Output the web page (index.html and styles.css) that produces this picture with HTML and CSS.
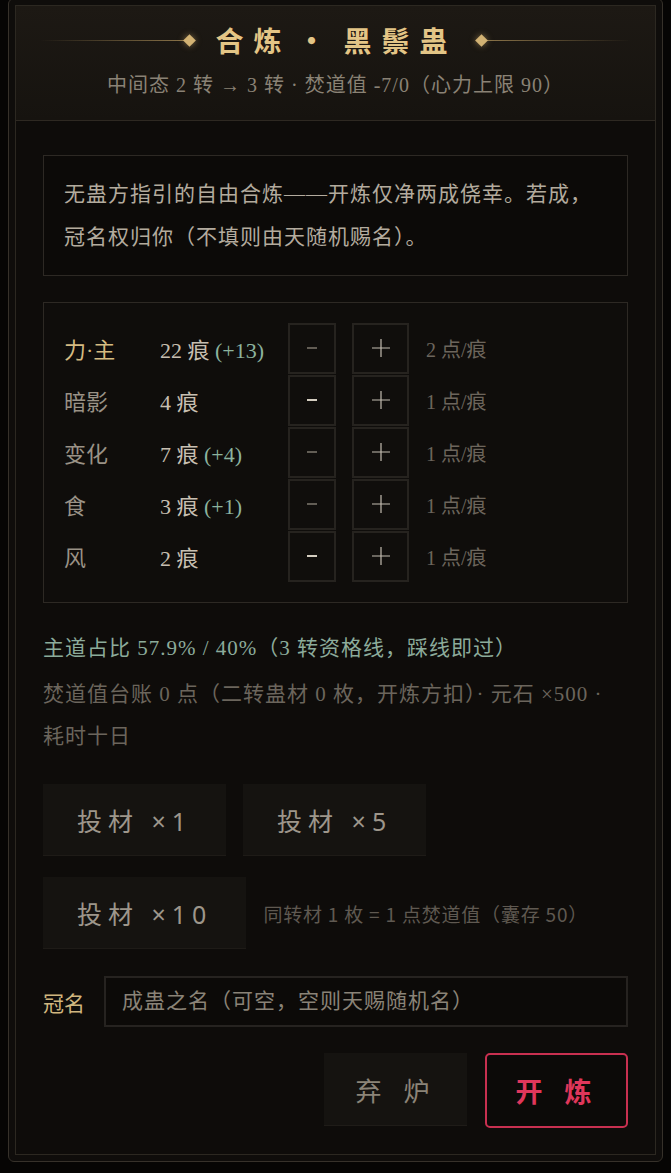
FILE: index.html
```html
<!DOCTYPE html>
<html lang="zh-CN">
<head>
    <meta charset="UTF-8">
    <meta name="viewport" content="width=device-width, initial-scale=1.0">
    <title>合炼 · 黑鬃蛊</title>
    <link rel="stylesheet" href="styles.css">
</head>
<body>
    <div class="frame">
        <div class="inner">
            <div class="head">
                <div class="title-row">
                    <span class="rule left"></span>
                    <span class="gem"></span>
                    <h1>合炼<span class="sep">·</span>黑鬃蛊</h1>
                    <span class="gem"></span>
                    <span class="rule right"></span>
                </div>
                <p class="sub">中间态 2 转 → 3 转 · 焚道值 -7/0（心力上限 90）</p>
            </div>

            <div class="content">
                <div class="note">无蛊方指引的自由合炼——开炼仅净两成侥幸。若成，冠名权归你（不填则由天随机赐名）。</div>

                <div class="paths">
                    <div class="path-row">
                        <span class="name main">力·主</span>
                        <span class="val">22 痕 <em>(+13)</em></span>
                        <button class="step minus"><svg width="10" height="2" viewBox="0 0 10 2"><path d="M0 1h10" stroke="currentColor" stroke-width="1.2"/></svg></button>
                        <button class="step plus"><svg width="18" height="18" viewBox="0 0 18 18"><path d="M9 0v18M0 9h18" stroke="currentColor" stroke-width="1.2"/></svg></button>
                        <span class="cost">2 点/痕</span>
                    </div>
                    <div class="path-row">
                        <span class="name">暗影</span>
                        <span class="val">4 痕</span>
                        <button class="step minus strong"><svg width="10" height="2" viewBox="0 0 10 2"><path d="M0 1h10" stroke="currentColor" stroke-width="2"/></svg></button>
                        <button class="step plus"><svg width="18" height="18" viewBox="0 0 18 18"><path d="M9 0v18M0 9h18" stroke="currentColor" stroke-width="1.2"/></svg></button>
                        <span class="cost">1 点/痕</span>
                    </div>
                    <div class="path-row">
                        <span class="name">变化</span>
                        <span class="val">7 痕 <em>(+4)</em></span>
                        <button class="step minus"><svg width="10" height="2" viewBox="0 0 10 2"><path d="M0 1h10" stroke="currentColor" stroke-width="1.2"/></svg></button>
                        <button class="step plus"><svg width="18" height="18" viewBox="0 0 18 18"><path d="M9 0v18M0 9h18" stroke="currentColor" stroke-width="1.2"/></svg></button>
                        <span class="cost">1 点/痕</span>
                    </div>
                    <div class="path-row">
                        <span class="name">食</span>
                        <span class="val">3 痕 <em>(+1)</em></span>
                        <button class="step minus"><svg width="10" height="2" viewBox="0 0 10 2"><path d="M0 1h10" stroke="currentColor" stroke-width="1.2"/></svg></button>
                        <button class="step plus"><svg width="18" height="18" viewBox="0 0 18 18"><path d="M9 0v18M0 9h18" stroke="currentColor" stroke-width="1.2"/></svg></button>
                        <span class="cost">1 点/痕</span>
                    </div>
                    <div class="path-row">
                        <span class="name">风</span>
                        <span class="val">2 痕</span>
                        <button class="step minus strong"><svg width="10" height="2" viewBox="0 0 10 2"><path d="M0 1h10" stroke="currentColor" stroke-width="2"/></svg></button>
                        <button class="step plus"><svg width="18" height="18" viewBox="0 0 18 18"><path d="M9 0v18M0 9h18" stroke="currentColor" stroke-width="1.2"/></svg></button>
                        <span class="cost">1 点/痕</span>
                    </div>
                </div>

                <p class="ratio">主道占比 57.9% / 40%（3 转资格线，踩线即过）</p>
                <p class="ledger">焚道值台账 0 点（二转蛊材 0 枚，开炼方扣）· 元石 ×500 · 耗时十日</p>

                <div class="feed-row">
                    <button class="feed">投材 ×1</button>
                    <button class="feed">投材 ×5</button>
                </div>
                <div class="feed-row second">
                    <button class="feed">投材 ×10</button>
                    <span class="hint">同转材 1 枚 = 1 点焚道值（囊存 50）</span>
                </div>

                <div class="name-row">
                    <label for="gu-name">冠名</label>
                    <input type="text" id="gu-name" placeholder="成蛊之名（可空，空则天赐随机名）">
                </div>

                <div class="actions">
                    <button class="btn-quit">弃 炉</button>
                    <button class="btn-start">开 炼</button>
                </div>
            </div>
        </div>
    </div>
</body>
</html>
```

FILE: styles.css
```css
body {
    margin: 0;
    padding: 0 8px 12px;
    background-color: #060504;
    font-family: 'Liberation Serif', 'Noto Sans CJK SC', serif;
    color: #b3ab9e;
}
.frame {
    margin-top: -2px;
    border: 1px solid #36312a;
    border-radius: 6px;
    padding: 6px;
    background: #0f0d0b;
}
.inner {
    border: 1px solid #2c2821;
    background: #0e0c0a;
}
.head {
    height: 115px;
    border-bottom: 1px solid #2e2922;
    background: linear-gradient(180deg, #1d1914 0%, #16130f 100%);
    box-sizing: border-box;
    padding-top: 16px;
}
.title-row {
    display: flex;
    align-items: center;
    justify-content: center;
    padding: 0 24px;
}
.title-row h1 {
    margin: 0 19px 0 21px;
    font-family: 'Noto Sans CJK SC', sans-serif;
    font-size: 28px;
    line-height: 36px;
    font-weight: 700;
    letter-spacing: 10px;
    color: #e3c586;
    white-space: nowrap;
}
.sep {
    display: inline-block;
    width: 40px;
    margin-right: 12px;
    text-align: center;
    letter-spacing: 0;
}
.rule {
    flex: 1;
    height: 1px;
}
.rule.left {
    background: linear-gradient(90deg, rgba(201, 169, 106, 0) 0%, #8a7348 100%);
}
.rule.right {
    background: linear-gradient(90deg, #8a7348 0%, rgba(201, 169, 106, 0) 100%);
}
.gem {
    width: 9px;
    height: 9px;
    background: #d2b273;
    transform: rotate(45deg);
    box-shadow: 0 0 6px rgba(226, 190, 120, 0.5);
    flex: none;
}
.sub {
    margin: 14px 0 0;
    text-align: center;
    font-size: 20px;
    line-height: 26px;
    letter-spacing: 1px;
    color: #8a8275;
}
.content {
    padding: 34px 27px 26px;
}
.note {
    border: 1px solid #2d2924;
    background: #0c0a08;
    padding: 17px 20px 16px;
    font-size: 21px;
    line-height: 43px;
    letter-spacing: 1px;
    color: #b3ab9e;
}
.paths {
    margin-top: 26px;
    border: 1px solid #2d2924;
    background: #0f0d0b;
    padding: 19px 20px 20px;
}
.path-row {
    display: flex;
    align-items: center;
    height: 52px;
    font-size: 22px;
}
.name {
    width: 96px;
    color: #9a9286;
}
.name.main {
    color: #d5bb82;
}
.val {
    width: 128px;
    color: #c7bfb1;
}
.val em {
    font-style: normal;
    color: #8cb39e;
}
.step {
    display: flex;
    align-items: center;
    justify-content: center;
    height: 51px;
    padding: 0;
    border: 2px solid #26231f;
    background: #100e0c;
    color: #9a9387;
    cursor: pointer;
}
.step.minus {
    width: 48px;
}
.step.minus.strong {
    color: #d4cdc0;
}
.step.plus {
    width: 57px;
    margin-left: 16px;
    color: #c4bdb1;
}
.cost {
    margin-left: 17px;
    font-size: 20px;
    color: #6c655c;
}
.ratio {
    margin: 26px 0 0;
    font-size: 21px;
    line-height: 38px;
    letter-spacing: 1px;
    color: #8cab9b;
}
.ledger {
    margin: 6px 0 0;
    font-size: 21px;
    line-height: 42px;
    letter-spacing: 1px;
    color: #6b655c;
}
.feed-row {
    display: flex;
    align-items: center;
    gap: 17px;
    margin-top: 27px;
}
.feed-row.second {
    margin-top: 21px;
}
.feed {
    height: 72px;
    min-width: 182px;
    padding: 0 34px;
    border: none;
    border-bottom: 1px solid #1e1b17;
    background: #151310;
    color: #9d968b;
    font-family: 'Noto Sans', 'Noto Sans CJK SC', sans-serif;
    font-size: 25px;
    letter-spacing: 6px;
    text-align: left;
    cursor: pointer;
}
.hint {
    font-family: 'Noto Sans CJK SC', sans-serif;
    font-size: 19px;
    letter-spacing: 0.8px;
    color: #5f5951;
}
.name-row {
    display: flex;
    align-items: center;
    gap: 19px;
    margin-top: 27px;
}
.name-row label {
    font-size: 21px;
    color: #d0b67f;
}
.name-row input {
    flex: 1;
    height: 51px;
    box-sizing: border-box;
    border: 2px solid #262320;
    background: #0c0a08;
    padding: 0 16px;
    font-family: 'Liberation Serif', 'Noto Sans CJK SC', serif;
    font-size: 21px;
    letter-spacing: 1px;
    color: #b3ab9e;
    outline: none;
}
.name-row input::placeholder {
    color: #8a8377;
}
.actions {
    display: flex;
    justify-content: flex-end;
    gap: 18px;
    margin-top: 26px;
}
.btn-quit {
    width: 143px;
    height: 73px;
    border: none;
    border-bottom: 1px solid #1f1c18;
    background: #151310;
    color: #8b8478;
    font-family: 'Noto Sans CJK SC', sans-serif;
    font-size: 26px;
    letter-spacing: 8px;
    padding-left: 8px;
    cursor: pointer;
}
.btn-start {
    width: 143px;
    height: 75px;
    border: 2px solid #c83050;
    border-radius: 5px;
    background: #0c0a08;
    color: #e0375b;
    font-family: 'Noto Sans CJK SC', sans-serif;
    font-size: 27px;
    font-weight: 700;
    letter-spacing: 8px;
    padding-left: 8px;
    cursor: pointer;
}
```
